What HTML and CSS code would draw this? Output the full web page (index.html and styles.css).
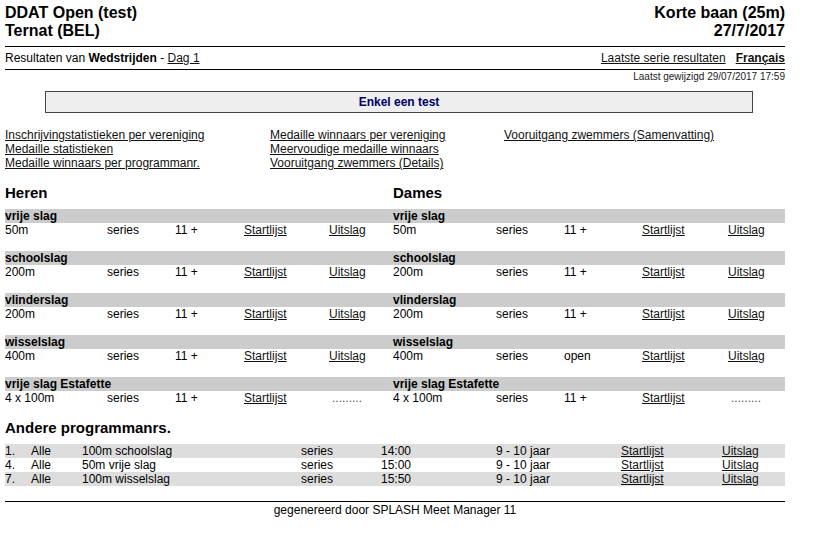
FILE: index.html
```html
<!DOCTYPE html>
<html>
<head>
<meta charset="utf-8">
<title>DDAT Open (test)</title>
<link rel="stylesheet" href="styles.css">
</head>
<body>
<div class="page">
  <div class="head">
    <div class="head-left">DDAT Open (test)<br>Ternat (BEL)</div>
    <div class="head-right">Korte baan (25m)<br>27/7/2017</div>
  </div>
  <div class="subbar">
    <div>Resultaten van <b>Wedstrijden</b> - <a href="#">Dag 1</a></div>
    <div class="subbar-right"><a href="#">Laatste serie resultaten</a><a href="#" class="bold">Français</a></div>
  </div>
  <div class="updated">Laatst gewijzigd 29/07/2017 17:59</div>
  <div class="notice">Enkel een test</div>

  <div class="links">
    <div class="links-col c1">
      <a href="#">Inschrijvingstatistieken per vereniging</a>
      <a href="#">Medaille statistieken</a>
      <a href="#">Medaille winnaars per programmanr.</a>
    </div>
    <div class="links-col c2">
      <a href="#">Medaille winnaars per vereniging</a>
      <a href="#">Meervoudige medaille winnaars</a>
      <a href="#">Vooruitgang zwemmers (Details)</a>
    </div>
    <div class="links-col c3">
      <a href="#">Vooruitgang zwemmers (Samenvatting)</a>
    </div>
  </div>

  <div class="events">
    <div class="gender span5">Heren</div>
    <div class="gender span5">Dames</div>

    <div class="stroke-bar">
      <div class="span5">vrije slag</div><div class="span5">vrije slag</div>
    </div>
    <div>50m</div><div>series</div><div>11 +</div><div><a href="#">Startlijst</a></div><div><a href="#">Uitslag</a></div>
    <div>50m</div><div>series</div><div>11 +</div><div><a href="#">Startlijst</a></div><div><a href="#">Uitslag</a></div>
    <div class="spacer"></div>

    <div class="stroke-bar">
      <div class="span5">schoolslag</div><div class="span5">schoolslag</div>
    </div>
    <div>200m</div><div>series</div><div>11 +</div><div><a href="#">Startlijst</a></div><div><a href="#">Uitslag</a></div>
    <div>200m</div><div>series</div><div>11 +</div><div><a href="#">Startlijst</a></div><div><a href="#">Uitslag</a></div>
    <div class="spacer"></div>

    <div class="stroke-bar">
      <div class="span5">vlinderslag</div><div class="span5">vlinderslag</div>
    </div>
    <div>200m</div><div>series</div><div>11 +</div><div><a href="#">Startlijst</a></div><div><a href="#">Uitslag</a></div>
    <div>200m</div><div>series</div><div>11 +</div><div><a href="#">Startlijst</a></div><div><a href="#">Uitslag</a></div>
    <div class="spacer"></div>

    <div class="stroke-bar">
      <div class="span5">wisselslag</div><div class="span5">wisselslag</div>
    </div>
    <div>400m</div><div>series</div><div>11 +</div><div><a href="#">Startlijst</a></div><div><a href="#">Uitslag</a></div>
    <div>400m</div><div>series</div><div>open</div><div><a href="#">Startlijst</a></div><div><a href="#">Uitslag</a></div>
    <div class="spacer"></div>

    <div class="stroke-bar">
      <div class="span5">vrije slag Estafette</div><div class="span5">vrije slag Estafette</div>
    </div>
    <div>4 x 100m</div><div>series</div><div>11 +</div><div><a href="#">Startlijst</a></div><div class="dots">.........</div>
    <div>4 x 100m</div><div>series</div><div>11 +</div><div><a href="#">Startlijst</a></div><div class="dots">.........</div>
  </div>

  <div class="section-title">Andere programmanrs.</div>
  <div class="programs">
    <div class="prog-row shade">
      <div>1.</div><div>Alle</div><div>100m schoolslag</div><div>series</div><div>14:00</div><div>9 - 10 jaar</div><div><a href="#">Startlijst</a></div><div><a href="#">Uitslag</a></div>
    </div>
    <div class="prog-row">
      <div>4.</div><div>Alle</div><div>50m vrije slag</div><div>series</div><div>15:00</div><div>9 - 10 jaar</div><div><a href="#">Startlijst</a></div><div><a href="#">Uitslag</a></div>
    </div>
    <div class="prog-row shade">
      <div>7.</div><div>Alle</div><div>100m wisselslag</div><div>series</div><div>15:50</div><div>9 - 10 jaar</div><div><a href="#">Startlijst</a></div><div><a href="#">Uitslag</a></div>
    </div>
  </div>

  <div class="footer">gegenereerd door SPLASH Meet Manager 11</div>
</div>
</body>
</html>
```

FILE: styles.css
```css
html, body {
  margin: 0;
  padding: 0;
  background: #ffffff;
}

body {
  font-family: "Liberation Sans", Arial, sans-serif;
  font-size: 12px;
  line-height: 14px;
  color: #000000;
}

a {
  color: #111111;
  text-decoration: underline;
}

.bold {
  font-weight: bold;
}

.page {
  width: 780px;
  padding: 4px 5px 0 5px;
}

.head {
  display: flex;
  justify-content: space-between;
  font-size: 16px;
  line-height: 18px;
  font-weight: bold;
  padding-bottom: 6px;
  border-bottom: 1px solid #000000;
}

.head-right {
  text-align: right;
}

.subbar {
  display: flex;
  justify-content: space-between;
  padding: 4px 0;
  border-bottom: 1px solid #000000;
}

.subbar-right {
  display: flex;
  gap: 10px;
}

.updated {
  text-align: right;
  font-size: 10px;
  line-height: 12px;
  padding-top: 1px;
  color: #222222;
}

.notice {
  margin: 8px 0 0 40px;
  width: 706px;
  height: 20px;
  line-height: 20px;
  border: 1px solid #444444;
  background: #eeeeee;
  text-align: center;
  font-weight: bold;
  color: #000066;
}

.links {
  display: flex;
  margin-top: 15px;
}

.links-col {
  display: flex;
  flex-direction: column;
  align-items: flex-start;
}

.links-col.c1 { width: 265px; }
.links-col.c2 { width: 234px; }

.events {
  display: grid;
  grid-template-columns: 102px 68px 69px 85px 64px 103px 68px 78px 86px 57px;
  margin-top: 14px;
}

.span5 {
  grid-column: span 5;
}

.gender {
  font-size: 15px;
  line-height: 17px;
  font-weight: bold;
  padding-bottom: 8px;
}

.stroke-bar {
  grid-column: 1 / -1;
  display: grid;
  grid-template-columns: 388px 392px;
  background: #cccccc;
  font-weight: bold;
}

.stroke-bar .span5 {
  grid-column: auto;
}

.spacer {
  grid-column: 1 / -1;
  height: 14px;
}

.dots {
  color: #555555;
  padding-left: 3px;
}

.section-title {
  font-size: 15px;
  line-height: 17px;
  font-weight: bold;
  margin-top: 14px;
  padding-bottom: 8px;
}

.prog-row {
  display: grid;
  grid-template-columns: 26px 51px 219px 80px 115px 125px 101px 63px;
}

.prog-row.shade {
  background: #dddddd;
}

.footer {
  margin-top: 15px;
  border-top: 1px solid #000000;
  padding-top: 1px;
  text-align: center;
}
```
